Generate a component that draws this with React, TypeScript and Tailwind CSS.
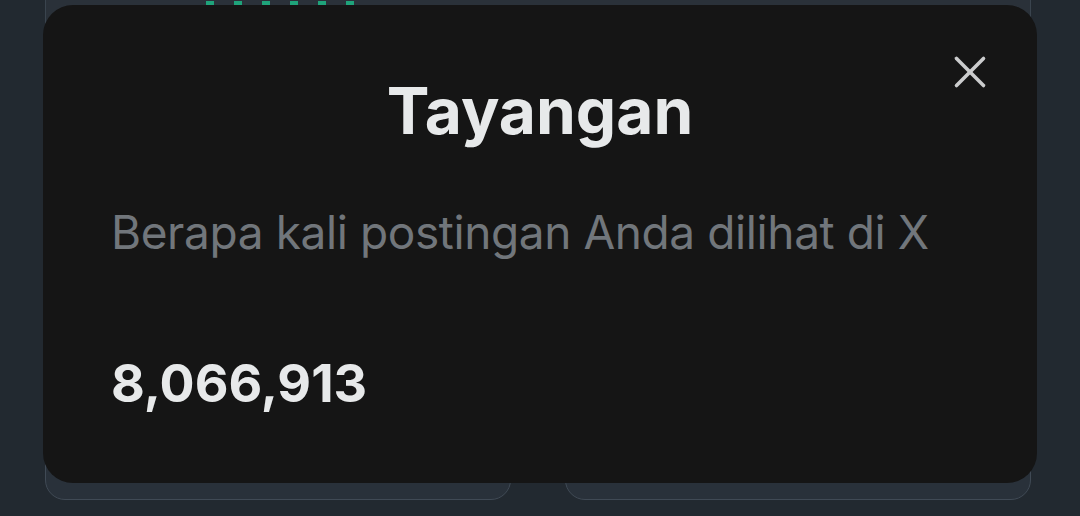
import React from 'react';
import { X } from 'lucide-react';

// pequenos traços verdes do gráfico no cartão de trás
const tracos = [0, 1, 2, 3, 4, 5];

export default function App() {
    return (
        <div className="relative w-full h-[516px] overflow-hidden bg-[#222930]" style={{ fontFamily: 'Inter, "Noto Sans", sans-serif' }}>
            {/* conteúdo por trás do diálogo */}
            <div className="flex flex-col h-full pl-[45px] pr-[49px] pb-[16px]">
                <div className="h-[300px] -mt-[40px] rounded-[20px] border border-[#3a444e] bg-[#2a3139] pl-[160px] pt-[40px]">
                    <div className="flex gap-[20px]">
                        {tracos.map((t) => (
                            <div key={t} className="w-[8px] h-[4px] bg-[#1fa37a]" />
                        ))}
                    </div>
                </div>
                <div className="flex-1" />
                <div className="flex gap-[54px]">
                    <div className="w-[466px] h-[120px] rounded-[20px] border border-[#404a55] bg-[#29313a]" />
                    <div className="w-[466px] h-[120px] rounded-[20px] border border-[#404a55] bg-[#29313a]" />
                </div>
            </div>

            {/* diálogo */}
            <div className="absolute left-[43px] top-[5px] w-[994px] h-[478px] rounded-[30px] bg-[#151515] pt-[74px] px-[68px]">
                <button className="absolute left-[900px] top-[40px] text-[#cbcccd]">
                    <X size={54} strokeWidth={1.6} />
                </button>
                <h1 className="text-center text-[64px] leading-none font-bold text-[#e7e9ea]">
                    Tayangan
                </h1>
                <p className="mt-[66px] whitespace-nowrap text-[46px] leading-none tracking-[-0.4px] text-[#71767b]">
                    Berapa kali postingan Anda dilihat di X
                </p>
                <p className="mt-[103px] text-[52px] leading-none font-bold text-[#e7e9ea]">
                    8,066,913
                </p>
            </div>
        </div>
    );
}
